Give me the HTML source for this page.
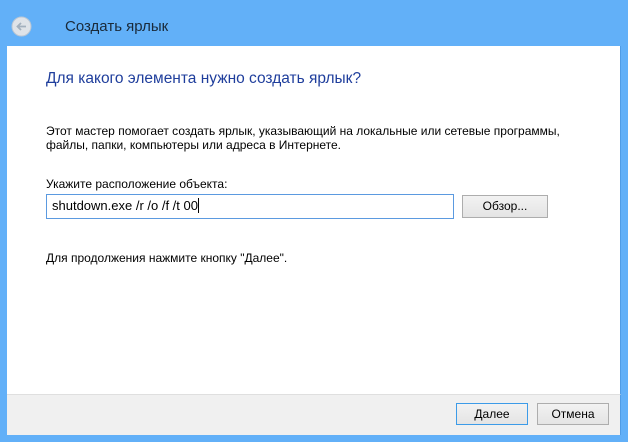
<!DOCTYPE html>
<html><head><meta charset="utf-8"><style>
*{margin:0;padding:0;box-sizing:border-box}
body{width:628px;height:442px;background:#62b0f8;position:relative;overflow:hidden;font-family:"Liberation Sans","Noto Sans CJK SC",sans-serif;color:#000}
.a{position:absolute;white-space:nowrap}
#main{position:absolute;left:7px;top:46px;width:614px;height:348px;background:#fff;border-right:1px solid #4f9ce6}
#foot{position:absolute;left:7px;top:394px;width:614px;height:41px;background:#f0f0f0;border-top:1px solid #dfdfdf;border-right:1px solid #4f9ce6}
.btn{position:absolute;height:22px;border:1px solid #adadad;background:linear-gradient(#f2f2f2,#e4e4e4);font-size:12px;text-align:center;line-height:20px}
</style></head><body>
<svg class="a" style="left:11px;top:16px" width="21" height="21" viewBox="0 0 21 21"><circle cx="10.5" cy="10.5" r="9.5" fill="#dfe3e8" stroke="#b9c6d4" stroke-width="1"/><path d="M15 10.5H6.5M10 7L6.5 10.5L10 14" fill="none" stroke="#a3b0be" stroke-width="1.8"/></svg>
<div class="a" style="left:65px;top:18px;font-size:15px;color:#1a2a3a">Создать ярлык</div>
<div id="main"></div>
<div class="a" style="left:46px;top:70px;font-size:15.5px;color:#1f3e9c">Для какого элемента нужно создать ярлык?</div>
<div class="a" style="left:46px;top:124px;font-size:12px;line-height:14px">Этот мастер помогает создать ярлык, указывающий на локальные или сетевые программы,<br>файлы, папки, компьютеры или адреса в Интернете.</div>
<div class="a" style="left:46px;top:177px;font-size:12px">Укажите расположение объекта:</div>
<div class="a" style="left:46px;top:194px;width:408px;height:25px;border:1px solid #5b9ae0;background:#fff;font-size:13px;line-height:22px;padding-left:5px">shutdown.exe /r /o /f /t 00<span style="display:inline-block;width:1px;height:15px;background:#000;vertical-align:-3px"></span></div>
<div class="btn" style="left:462px;top:195px;width:86px;height:23px">Обзор...</div>
<div class="a" style="left:46px;top:251px;font-size:12px">Для продолжения нажмите кнопку "Далее".</div>
<div id="foot"></div>
<div class="btn" style="left:456px;top:403px;width:72px;border-color:#3c9be8">Далее</div>
<div class="btn" style="left:537px;top:403px;width:72px">Отмена</div>
</body></html>
